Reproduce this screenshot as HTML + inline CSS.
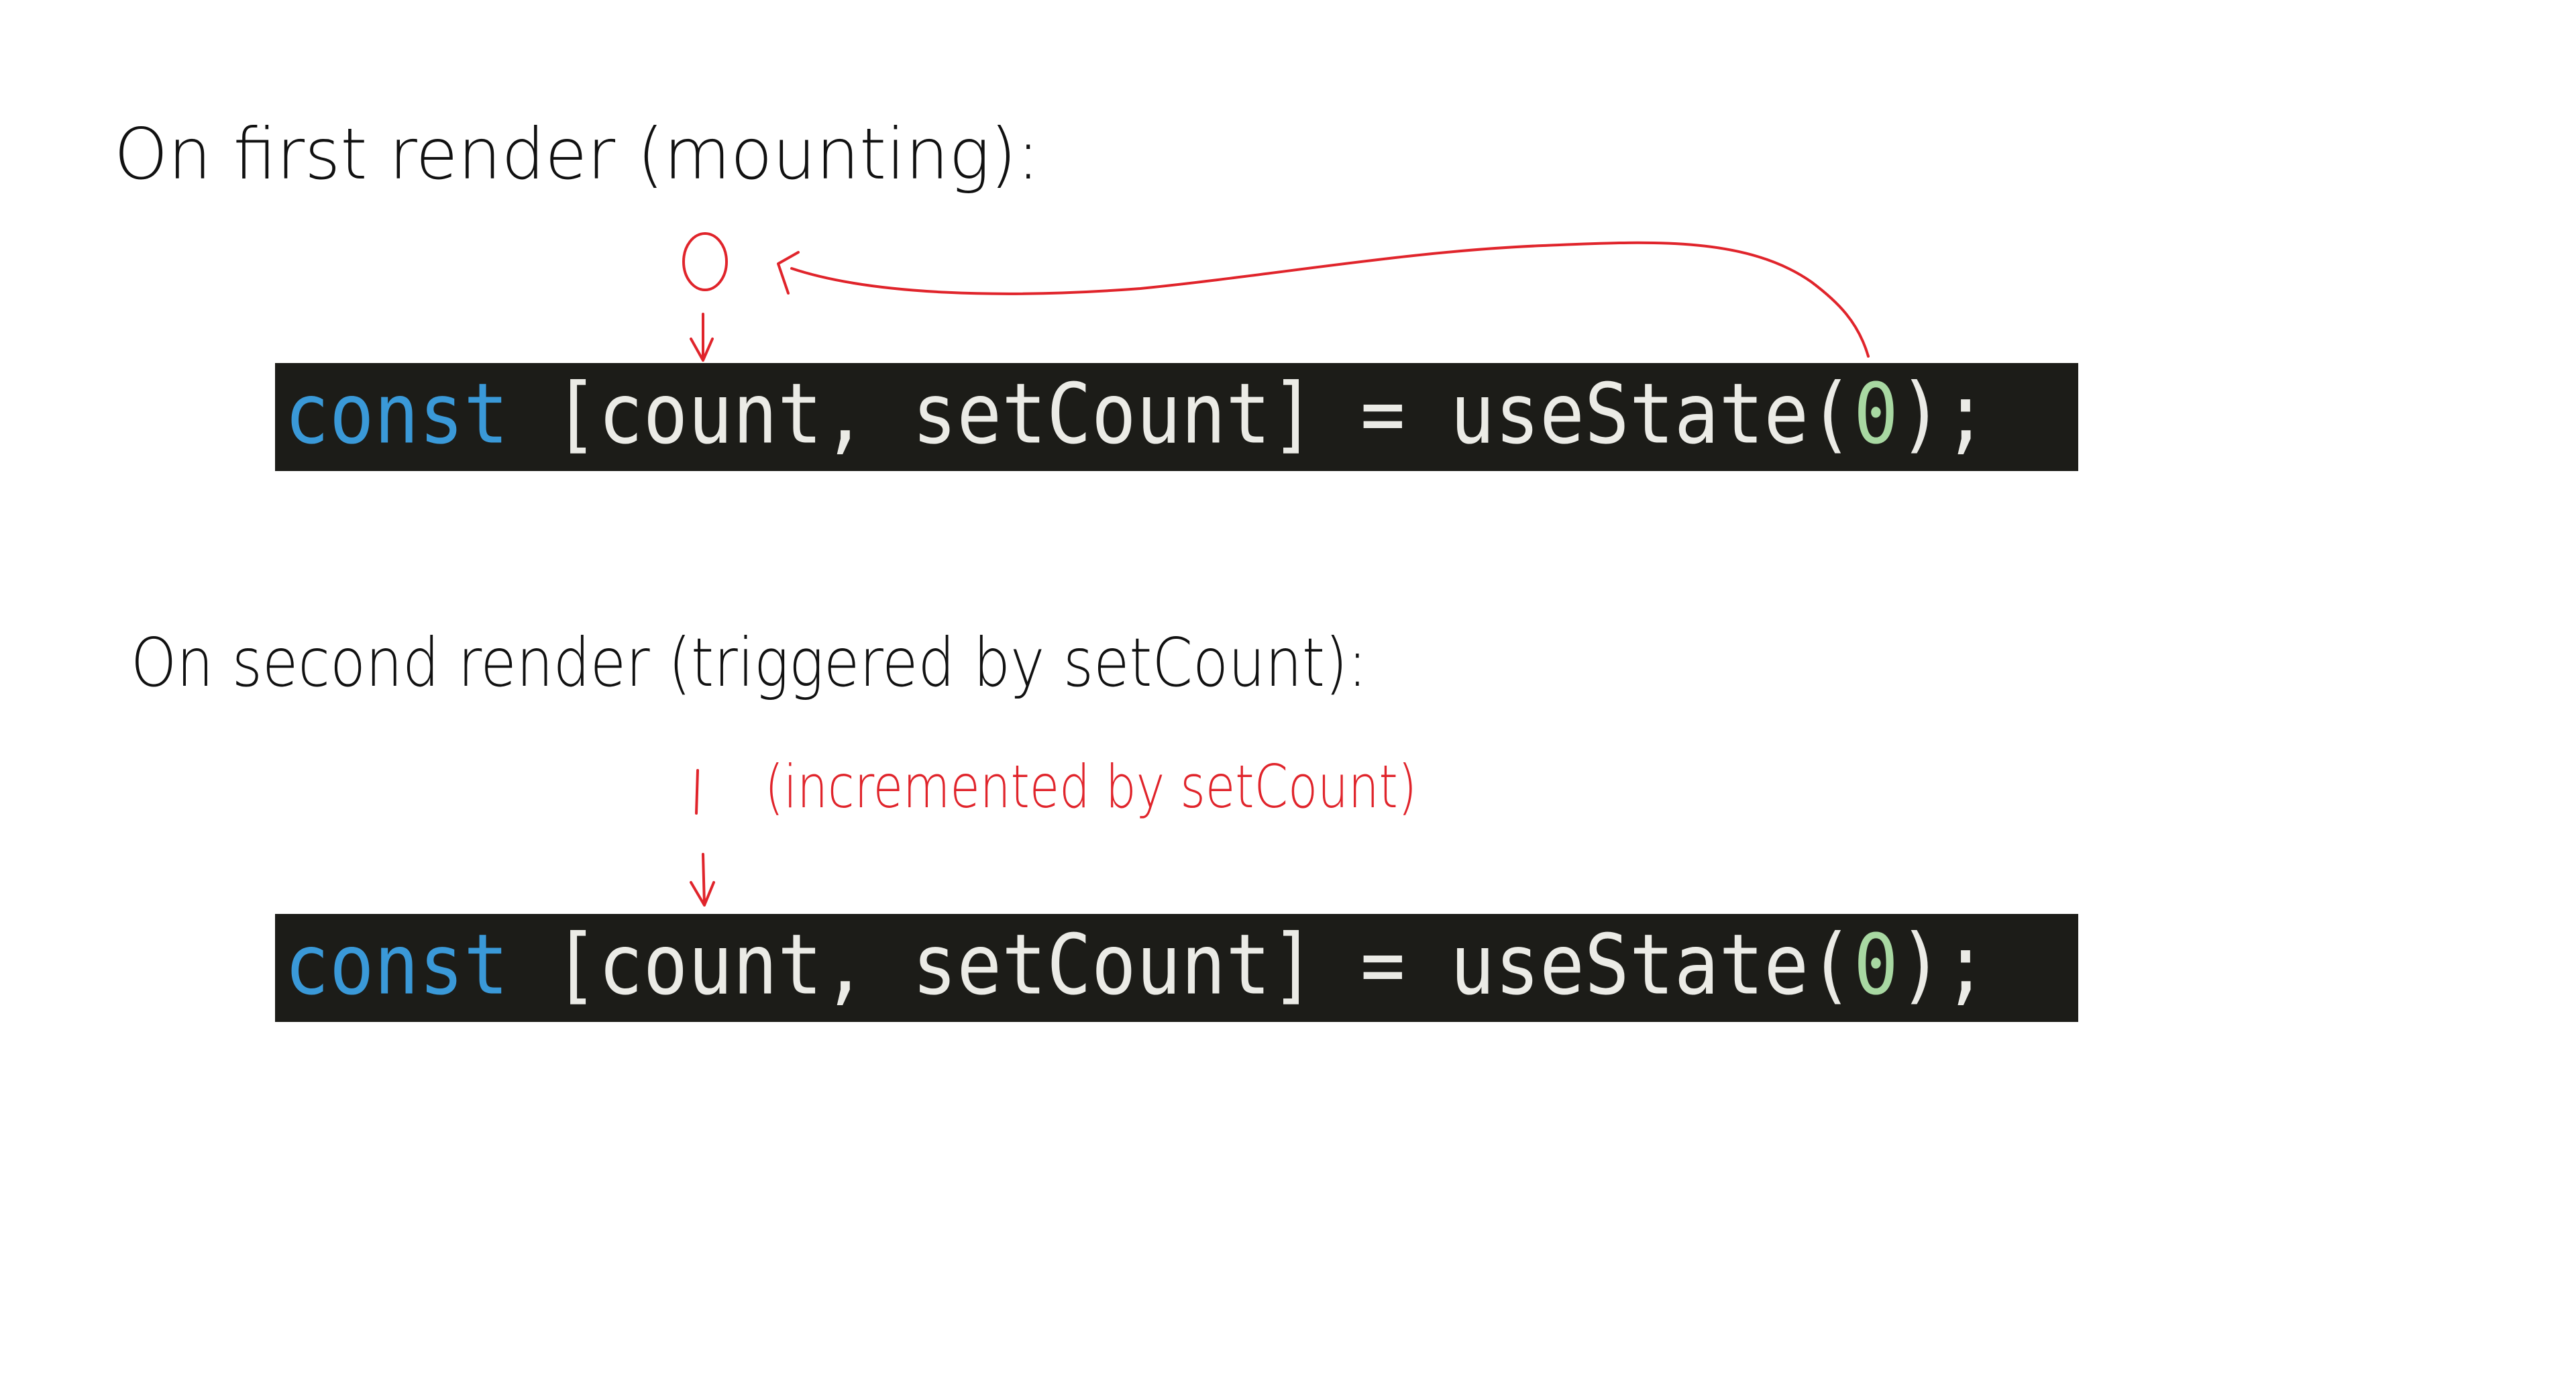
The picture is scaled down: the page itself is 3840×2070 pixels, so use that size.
<!DOCTYPE html>
<html><head><meta charset="utf-8">
<style>
html,body{margin:0;padding:0;background:#fff;width:3840px;height:2070px;overflow:hidden;position:relative}
.code{position:absolute;left:410px;width:2688px;height:161px;background:#1c1c18;}
.code span.t{position:absolute;left:14px;top:2px;font-family:"DejaVu Sans Mono","Liberation Mono",monospace;font-size:111px;color:#ebebe6;white-space:pre;transform:scaleY(1.12);transform-origin:0 0;line-height:1.2}
.k{color:#3a99d8}.n{color:#a8d8a2}
svg{position:absolute;left:0;top:0}
</style></head><body>
<div class="code" style="top:541px"><span class="t"><span class="k">const</span> [count, setCount] = useState(<span class="n">0</span>);</span></div>
<div class="code" style="top:1362px"><span class="t"><span class="k">const</span> [count, setCount] = useState(<span class="n">0</span>);</span></div>
<svg width="3840" height="2070" viewBox="0 0 3840 2070">
<g font-family="DejaVu Sans, Liberation Sans, sans-serif" font-weight="200">
<text x="170" y="266" font-size="105" fill="#111" textLength="1380" lengthAdjust="spacingAndGlyphs">On first render (mounting):</text>
<text x="195" y="1022" font-size="100" fill="#111" textLength="1843" lengthAdjust="spacingAndGlyphs">On second render (triggered by setCount):</text>
<text x="1140" y="1203" font-size="88" fill="#e0242b" textLength="972" lengthAdjust="spacingAndGlyphs">(incremented by setCount)</text>
</g>
<g fill="none" stroke="#e0242b" stroke-width="4" stroke-linecap="round" stroke-linejoin="round">
<ellipse cx="1051" cy="390" rx="32" ry="42"/>
<path d="M1040 1148 L1038 1212"/>
<path d="M1048 468 L1048 537 M1030 505 L1048 537 L1062 505"/>
<path d="M1048 1273 L1050 1349 M1030 1315 L1050 1349 L1064 1315"/>
<path d="M2785 531 C2770 480 2740 450 2700 420 C2600 350 2450 360 2300 366 C2100 374 1900 410 1700 430 C1500 445 1300 440 1180 400"/>
<path d="M1190 376 L1160 393 L1175 437"/>
</g>
</svg>
</body></html>
